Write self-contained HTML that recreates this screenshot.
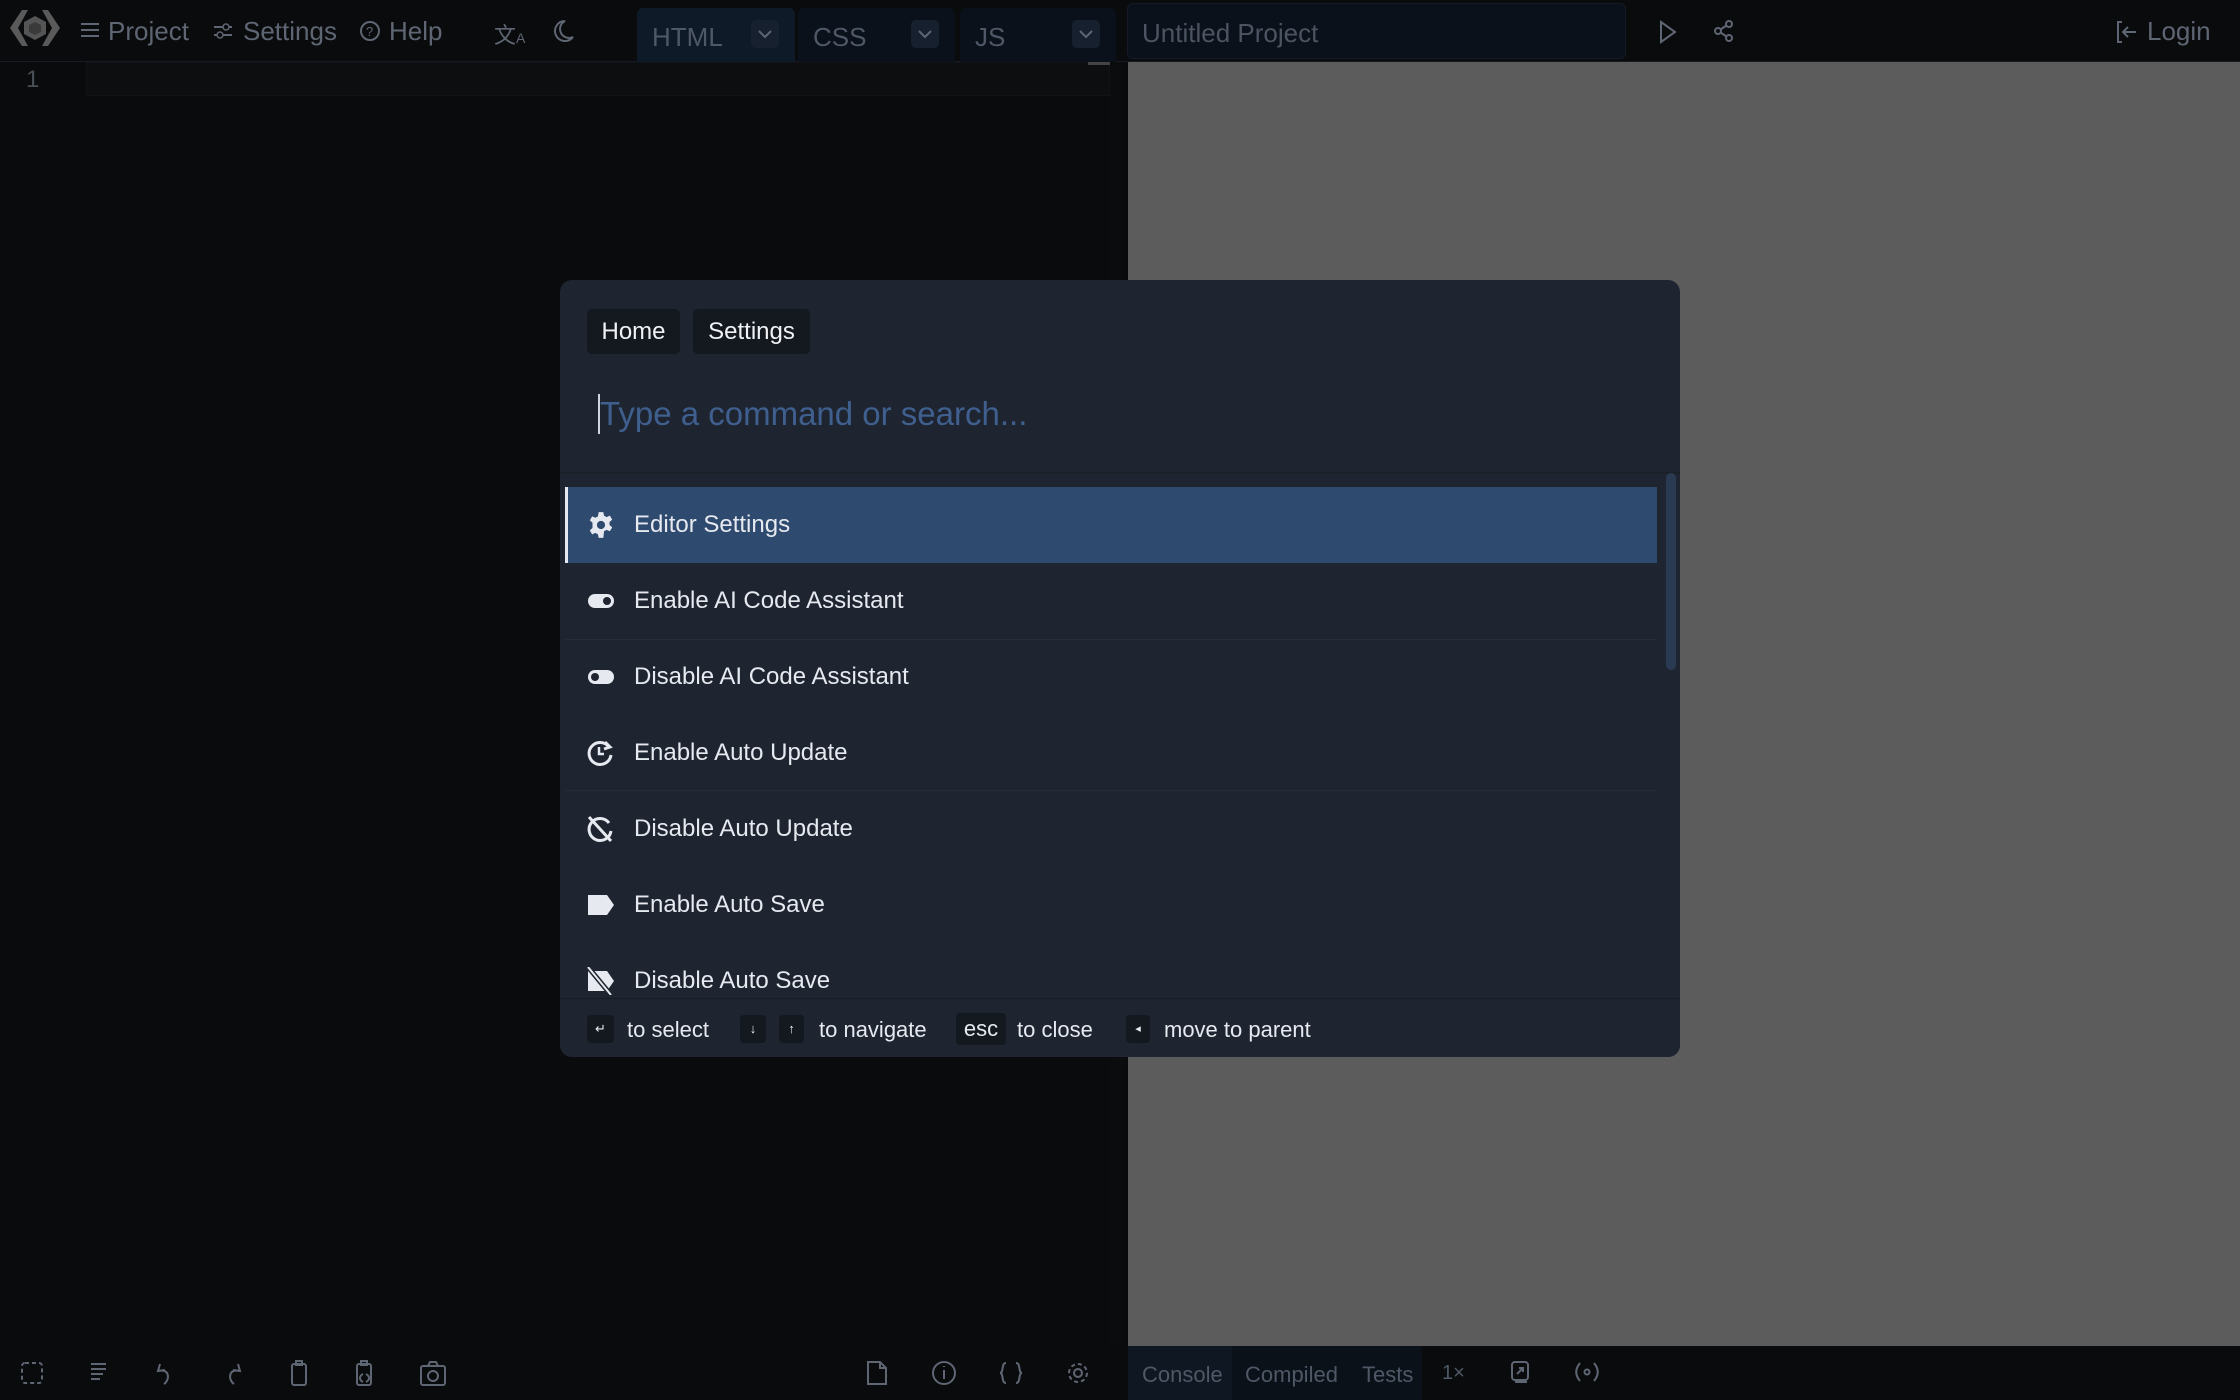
<!DOCTYPE html>
<html><head><meta charset="utf-8"><style>
*{box-sizing:border-box;margin:0;padding:0}
body{width:2240px;height:1400px;background:#0a0b0d;font-family:"Liberation Sans",sans-serif;position:relative;overflow:hidden;color:#6b7280}
.a{position:absolute}
.top{left:0;top:0;width:2240px;height:62px;background:#0a0b0d;border-bottom:1px solid #151b24}
.t{font-size:26px;color:#5f6673;top:16px}
.tab{top:8px;height:54px;background:#0b111a;border-radius:6px 6px 0 0}
.tab span{position:absolute;left:15px;top:14px;font-size:26px;color:#4f5866}
.chev{position:absolute;right:16px;top:12px;width:28px;height:28px;background:#16202e;border-radius:5px}
.ic{stroke:#5f6673;fill:none;stroke-width:2}
.modal{left:560px;top:280px;width:1120px;height:777px;background:#1f2530;border-radius:12px;overflow:hidden}
.bc{top:29px;height:45px;background:#14181f;border-radius:5px;color:#f0f2f5;font-size:24px;line-height:45px;text-align:center}
.row{left:5px;width:1092px;height:76px}
.row span{position:absolute;left:69px;top:24px;font-size:24px;color:#e6e9f0}
.row svg{position:absolute;left:22px;top:24px}
.ft{font-size:22px;color:#e6e9f0;top:737px}
.kb{background:#14181f;border-radius:4px;height:28px;top:735px;color:#e6e9f0;font-size:13px;text-align:center;line-height:28px}
</style></head><body>
<div class="a top"></div>
<svg class="a" style="left:6px;top:6px" width="58" height="44" viewBox="0 0 58 44">
<path d="M16 4 L4 22 L16 40 L22 40 L12 22 L22 4Z" fill="#5a5a5a"/>
<path d="M42 4 L54 22 L42 40 L36 40 L46 22 L36 4Z" fill="#5a5a5a"/>
<path d="M29 10 L40 16 L40 28 L29 34 L18 28 L18 16Z" fill="#555"/><path d="M29 16 L35 19 L35 26 L29 29 L23 26 L23 19Z" fill="#3a3a3a"/>
</svg>
<svg class="a" style="left:80px;top:22px" width="20" height="16"><path class="ic" d="M1 2H19M1 8H19M1 14H19" stroke-width="1.5"/></svg>
<div class="a t" style="left:108px">Project</div>
<svg class="a" style="left:212px;top:20px" width="22" height="22"><path class="ic" stroke-width="1.5" d="M2 7H20M2 15H20"/><circle cx="14" cy="7" r="3" fill="#0a0b0d" stroke="#5f6673" stroke-width="1.5"/><circle cx="8" cy="15" r="3" fill="#0a0b0d" stroke="#5f6673" stroke-width="1.5"/></svg>
<div class="a t" style="left:243px">Settings</div>
<svg class="a" style="left:359px;top:20px" width="22" height="22"><circle class="ic" cx="11" cy="11" r="9" stroke-width="1.5"/><text x="7" y="16" font-size="13" fill="#5f6673">?</text></svg>
<div class="a t" style="left:389px">Help</div>
<div class="a" style="left:494px;top:18px;font-size:22px;color:#5f6673">文<span style="font-size:14px">A</span></div>
<svg class="a" style="left:553px;top:19px" width="22" height="24"><path class="ic" stroke-width="1.8" d="M12 2A10 10 0 1 0 20 18A8 8 0 0 1 12 2Z"/></svg>
<div class="a tab" style="left:637px;width:158px;background:#0f1a28"><span>HTML</span><div class="chev"><svg width="28" height="28"><path class="ic" stroke-width="1.5" d="M8 11L14 17L20 11"/></svg></div></div>
<div class="a tab" style="left:798px;width:157px"><span>CSS</span><div class="chev"><svg width="28" height="28"><path class="ic" stroke-width="1.5" d="M8 11L14 17L20 11"/></svg></div></div>
<div class="a tab" style="left:960px;width:156px"><span>JS</span><div class="chev"><svg width="28" height="28"><path class="ic" stroke-width="1.5" d="M8 11L14 17L20 11"/></svg></div></div>
<div class="a" style="left:1127px;top:3px;width:499px;height:56px;background:#0b111a;border:1px solid #141b26;border-radius:6px"><span style="position:absolute;left:14px;top:14px;font-size:26px;color:#4c5462">Untitled Project</span></div>
<svg class="a" style="left:1658px;top:20px" width="20" height="24"><path class="ic" stroke-width="1.5" d="M3 2L17 12L3 22Z"/></svg>
<svg class="a" style="left:1714px;top:20px" width="20" height="22"><circle class="ic" cx="15" cy="4" r="3" stroke-width="1.5"/><circle class="ic" cx="4" cy="11" r="3" stroke-width="1.5"/><circle class="ic" cx="15" cy="18" r="3" stroke-width="1.5"/><path class="ic" stroke-width="1.5" d="M6.5 9.5L12.5 5.5M6.5 12.5L12.5 16.5"/></svg>
<svg class="a" style="left:2116px;top:20px" width="22" height="24"><path class="ic" stroke-width="1.5" d="M6 2H2V22H6M20 12H8M12 7L7 12L12 17"/></svg>
<div class="a t" style="left:2147px">Login</div>
<!-- editor -->
<div class="a" style="left:86px;top:62px;width:1024px;height:34px;background:#0d0e10;border:1px solid #121316"></div>
<div class="a" style="left:26px;top:66px;font-size:24px;color:#4a4f57">1</div>
<div class="a" style="left:1088px;top:62px;width:22px;height:3px;background:#444"></div>
<div class="a" style="left:1110px;top:62px;width:14px;height:1282px;background:#0b0c0e"></div>
<!-- preview -->
<div class="a" style="left:1128px;top:62px;width:1112px;height:1284px;background:#5c5c5c"></div>
<!-- bottom bar -->
<div class="a" style="left:0;top:1346px;width:2240px;height:54px;background:#0a0b0d"></div>
<svg class="a" style="left:0;top:1346px" width="1128" height="54">
<g class="ic" stroke-width="1.5">
<rect x="22" y="17" width="20" height="20" rx="3" stroke-dasharray="4 3"/>
<path d="M91 18H106M91 23H106M91 28H103M91 33H100"/>
<path d="M160 18L158 25L165 24M158 25C170 22 170 34 164 38"/>
<path d="M238 18L240 25L233 24M240 25C228 22 228 34 234 38"/>
<rect x="292" y="18" width="14" height="21" rx="2"/><rect x="296" y="15" width="6" height="4"/>
<rect x="357" y="18" width="14" height="21" rx="2"/><rect x="361" y="15" width="6" height="4"/><path d="M363 28C359 30 359 34 363 36M366 28C370 30 370 34 366 36"/>
<rect x="421" y="20" width="24" height="19" rx="2"/><circle cx="433" cy="30" r="5"/><path d="M428 20L430 16H436L438 20"/>
<path d="M868 16H880L886 22V38H868Z"/><path d="M880 16V22H886"/>
<circle cx="944" cy="27" r="11"/><path d="M944 24V33M944 20V21"/>
<path d="M1006 17C1001 17 1004 27 1000 27C1004 27 1001 37 1006 37M1016 17C1021 17 1018 27 1022 27C1018 27 1021 37 1016 37"/>
<circle cx="1078" cy="27" r="4"/><circle cx="1078" cy="27" r="9" stroke-dasharray="4 3"/>
</g></svg>
<div class="a" style="left:1128px;top:1346px;width:104px;height:54px;background:#0f1722"></div>
<div class="a" style="left:1232px;top:1346px;width:190px;height:54px;background:#0b1119"></div>
<div class="a" style="left:1142px;top:1362px;font-size:22px;color:#4f5866">Console</div>
<div class="a" style="left:1245px;top:1362px;font-size:22px;color:#4f5866">Compiled</div>
<div class="a" style="left:1362px;top:1362px;font-size:22px;color:#4f5866">Tests</div>
<div class="a" style="left:1442px;top:1362px;font-size:20px;color:#4f5866">1×</div>
<svg class="a" style="left:1500px;top:1358px" width="110" height="30"><g class="ic" stroke-width="1.5"><rect x="12" y="4" width="16" height="18" rx="3"/><path d="M15 24H27M17 16L23 10M19 10H23V14"/><circle cx="87" cy="14" r="2.5"/><path d="M80 5C75 11 75 17 80 23M94 5C99 11 99 17 94 23"/></g></svg>
<!-- modal -->
<div class="a modal">
<div class="a bc" style="left:27px;width:93px">Home</div>
<div class="a bc" style="left:133px;width:117px">Settings</div>
<div class="a" style="left:38px;top:114px;width:2px;height:40px;background:#cfd6e0"></div>
<div class="a" style="left:40px;top:115px;font-size:33px;color:#3f5f8f">Type a command or search...</div>
<div class="a" style="left:0;top:192px;width:1120px;height:2px;background:#1a1f28"></div>
<div class="a" style="left:1106px;top:193px;width:10px;height:197px;background:#2a3a52;border-radius:5px"></div>
<div class="a row" style="top:207px;background:#2e4a6e;border-left:3px solid #e6e9f0"><svg style="left:19px" width="28" height="28" viewBox="0 0 24 24"><path fill="#e6e9f0" d="M10 1h4l.6 3 2.2 1.2 2.8-1.2 2 3.4-2.3 2v2.6l2.3 2-2 3.4-2.8-1.2-2.2 1.2L14 23h-4l-.6-3-2.2-1.2-2.8 1.2-2-3.4 2.3-2V10L2.4 8 4.4 4.6l2.8 1.2L9.4 4.6Z"/><circle cx="12" cy="12" r="3.5" fill="#2e4a6e"/></svg><span style="left:66px">Editor Settings</span></div>
<div class="a row" style="top:283px"><svg width="28" height="28"><rect x="1" y="7" width="26" height="14" rx="7" fill="#e6e9f0"/><circle cx="20" cy="14" r="4" fill="#1f2530"/></svg><span>Enable AI Code Assistant</span></div>
<div class="a" style="left:5px;top:359px;width:1092px;height:1px;background:#262d39"></div>
<div class="a row" style="top:359px"><svg width="28" height="28"><rect x="1" y="7" width="26" height="14" rx="7" fill="#e6e9f0"/><circle cx="8" cy="14" r="4" fill="#1f2530"/></svg><span>Disable AI Code Assistant</span></div>
<div class="a row" style="top:435px"><svg width="28" height="28"><path d="M22 8A11 11 0 1 0 24 16" fill="none" stroke="#e6e9f0" stroke-width="3"/><path d="M18 3L23 8L17 10" fill="none" stroke="#e6e9f0" stroke-width="3"/><path d="M12 8V15H17" fill="none" stroke="#e6e9f0" stroke-width="2.5"/></svg><span>Enable Auto Update</span></div>
<div class="a" style="left:5px;top:510px;width:1092px;height:1px;background:#262d39"></div>
<div class="a row" style="top:511px"><svg width="28" height="28"><path d="M22 8A11 11 0 1 0 24 16" fill="none" stroke="#e6e9f0" stroke-width="3"/><path d="M2 2L24 26" stroke="#e6e9f0" stroke-width="3"/></svg><span>Disable Auto Update</span></div>
<div class="a row" style="top:587px"><svg width="28" height="28"><path d="M1 4H20L27 14L20 24H1Z" fill="#e6e9f0"/></svg><span>Enable Auto Save</span></div>
<div class="a row" style="top:663px"><svg width="28" height="28"><path d="M1 4H20L27 14L20 24H1Z" fill="#e6e9f0"/><path d="M1 0L24 28" stroke="#1f2530" stroke-width="5"/><path d="M1 0L24 28" stroke="#e6e9f0" stroke-width="2"/></svg><span>Disable Auto Save</span></div>
<div class="a" style="left:0;top:718px;width:1120px;height:59px;background:#1f2530;border-top:1px solid #171b22"></div>
<div class="a kb" style="left:27px;width:27px">↵</div>
<div class="a ft" style="left:67px">to select</div>
<div class="a kb" style="left:180px;width:26px">↓</div>
<div class="a kb" style="left:219px;width:25px">↑</div>
<div class="a ft" style="left:259px">to navigate</div>
<div class="a kb" style="left:396px;top:733px;width:50px;height:32px;font-size:22px;line-height:32px">esc</div>
<div class="a ft" style="left:457px">to close</div>
<div class="a kb" style="left:566px;width:24px;font-size:11px">◂</div>
<div class="a ft" style="left:604px">move to parent</div>
</div>
</body></html>
